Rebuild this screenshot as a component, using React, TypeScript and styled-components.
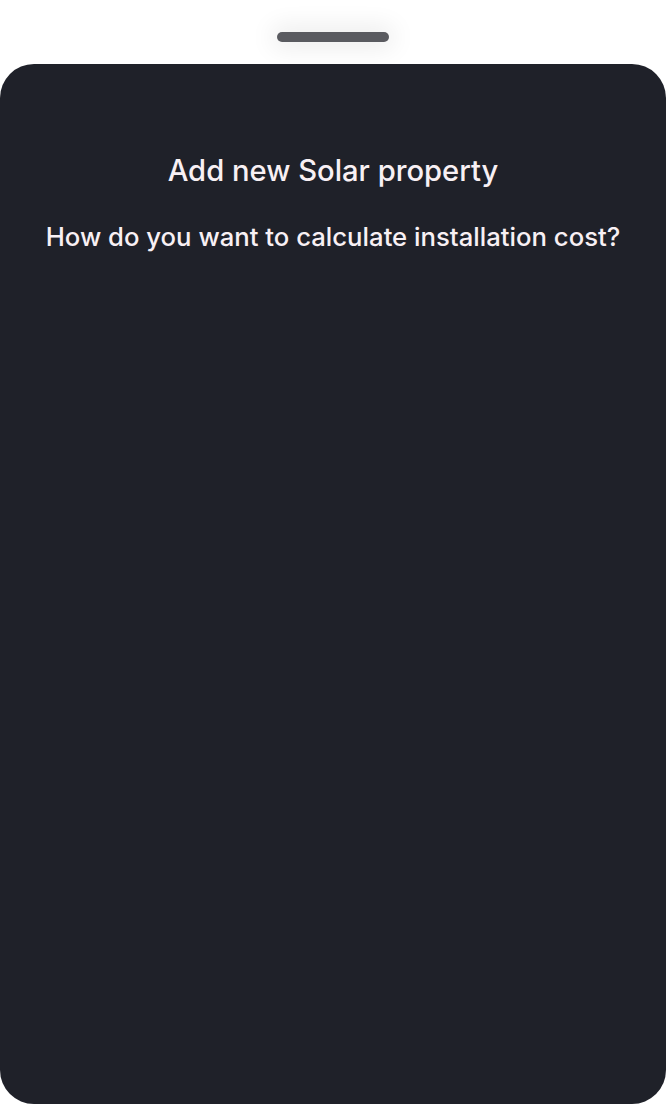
import styled, { createGlobalStyle } from "styled-components";

const GlobalStyle = createGlobalStyle`
  html, body {
    margin: 0;
    padding: 0;
    background: #ffffff;
    font-family: Inter, "Noto Sans", sans-serif;
  }
`;

const App = () => {
  return (
    <>
      <GlobalStyle />
      <Page>
        <HandleArea>
          <Handle />
        </HandleArea>
        <Sheet>
          <Title>Add new Solar property</Title>
          <Question>How do you want to calculate installation cost?</Question>
        </Sheet>
      </Page>
    </>
  );
};

export default App;

const Page = styled.div`
  width: 666px;
  height: 1104px;
  display: flex;
  flex-direction: column;
  background: #ffffff;
`;
const HandleArea = styled.div`
  height: 64px;
  display: flex;
  justify-content: center;
  align-items: flex-start;
  padding-top: 32px;
  box-sizing: border-box;
`;
const Handle = styled.div`
  width: 112px;
  height: 10px;
  border-radius: 5px;
  background: #5a5b60;
  box-shadow: 0 0 24px 6px rgba(0, 0, 0, 0.08);
`;
const Sheet = styled.div`
  flex: 1;
  background: #1f2129;
  border-radius: 34px;
  display: flex;
  flex-direction: column;
  align-items: center;
  padding-top: 87px;
  box-sizing: border-box;
  color: #f8f0f4;
`;
const Title = styled.div`
  font-size: 29.2px;
  font-weight: 500;
  line-height: 40px;
`;
const Question = styled.div`
  margin-top: 29px;
  font-size: 25.7px;
  font-weight: 500;
  line-height: 34px;
`;
